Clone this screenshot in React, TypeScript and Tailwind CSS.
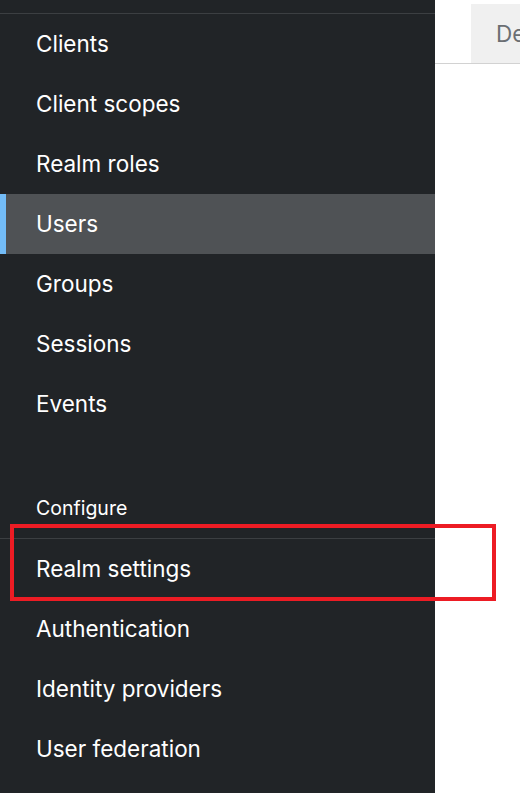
import React from "react";

const top = ["Clients", "Client scopes", "Realm roles", "Users", "Groups", "Sessions", "Events"];
const bottom = ["Realm settings", "Authentication", "Identity providers", "User federation"];

function Item({ label, active }: { label: string; active?: boolean }) {
  return (
    <div
      className={
        "h-[60px] flex items-center text-[22.5px] text-white leading-none " +
        (active ? "bg-[#4f5255] border-l-[6px] border-[#73bcf7] pl-[30px]" : "pl-[36px]")
      }
    >
      {label}
    </div>
  );
}

export default function App() {
  return (
    <div
      className="relative w-[520px] h-[793px] overflow-hidden bg-white flex"
      style={{ fontFamily: 'Inter, "Liberation Sans", sans-serif' }}
    >
      <div className="w-[435px] shrink-0 h-full bg-[#212427] flex flex-col">
        <div className="h-[14px] shrink-0 border-b border-[#3c3f42]" />
        {top.map((t) => (
          <Item key={t} label={t} active={t === "Users"} />
        ))}
        <div className="h-[50px] shrink-0" />
        <div className="h-[55px] shrink-0 flex items-center pb-[4px] pl-[36px] text-[19.5px] leading-none text-white border-b border-[#3c3f42]">
          Configure
        </div>
        {bottom.map((t) => (
          <Item key={t} label={t} />
        ))}
      </div>
      <div className="flex-1 flex flex-col">
        <div className="h-[64px] border-b border-[#d2d2d2] pt-[4px] pl-[36px]">
          <div className="h-full bg-[#f0f0f0] flex items-center pl-[25px] text-[22.5px] text-[#6a6e73] overflow-hidden whitespace-nowrap">
            Details
          </div>
        </div>
      </div>
      <div className="absolute left-[10px] top-[524px] w-[486px] h-[77px] border-[4px] border-[#ed1c24]" />
    </div>
  );
}
